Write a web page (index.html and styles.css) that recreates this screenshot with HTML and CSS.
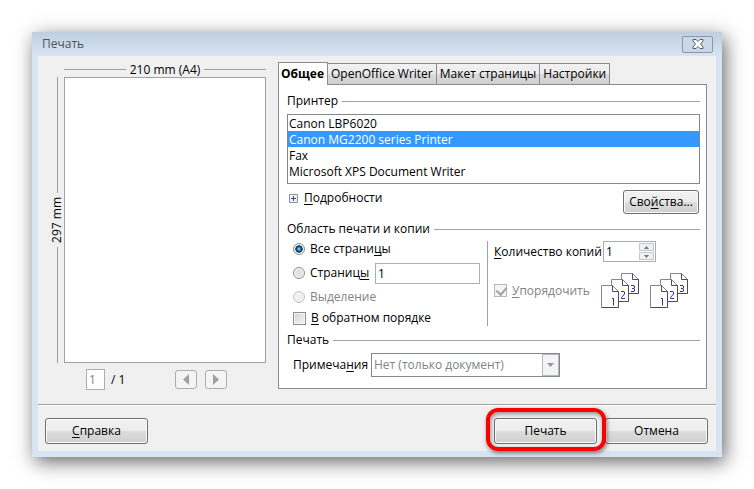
FILE: index.html
```html
<!DOCTYPE html>
<html lang="ru">
<head>
<meta charset="utf-8">
<title>Печать</title>
<link rel="stylesheet" href="styles.css">
</head>
<body>
<svg class="defs" aria-hidden="true">
  <symbol id="collate" viewBox="0 0 38 35">
    <g fill="#fff" stroke="#7d87a0">
      <path d="M20.500.5h11l6 6v14h-17z"/><path d="M31.500.5v6h6v14h-17" stroke="#4a4c58"/>
      <path d="M10.500 6.500h11l6 6v16h-17z"/><path d="M21.500 6.500v6h6v16h-17" stroke="#4a4c58"/>
      <path d="M.5 12.500h11l6 6v16h-17z"/><path d="M11.500 12.500v6h6v16H.5" stroke="#4a4c58"/>
    </g>
    <g fill="none" stroke="#42249c">
      <path d="M30 12.500h3l.5.500v2l-.5.500h-2M33 15.500l.5.500v2l-.5.500h-3"/>
      <path d="M20 18.500h3l.5.500v2L20.500 24.500v1H24"/>
      <path d="M11 25.500h1.500v7"/>
    </g>
  </symbol>
</svg>
<main class="window">
  <header class="titlebar">
    <h1 class="title">Печать</h1>
    <button class="close" type="button" aria-label="Закрыть">
      <svg width="12" height="10" viewBox="0 0 12 10"><path d="M1 .5h3l2 2 2-2h3v1.500L8.500 5 11 8v1.500H8l-2-2-2 2H1V8l2.500-3L1 2z" fill="#fff" stroke="#565f70"/></svg>
    </button>
  </header>
  <form class="client">
    <div class="content">
      <section class="preview" aria-label="Просмотр">
        <div class="ruler ruler-x"><span>210 mm (A4)</span></div>
        <div class="ruler ruler-y"><span>297 mm</span></div>
        <div class="sheet"></div>
        <div class="pager">
          <input class="field page-no" type="text" value="1" aria-label="Номер страницы" disabled>
          <span class="total">/ 1</span>
          <button class="step" type="button" aria-label="Назад" disabled><svg width="6" height="11" viewBox="0 0 6 11"><path d="M6 0v11L0 5.500z"/></svg></button>
          <button class="step" type="button" aria-label="Вперёд" disabled><svg width="6" height="11" viewBox="0 0 6 11"><path d="M0 0v11l6-5.500z"/></svg></button>
        </div>
      </section>
      <section class="settings">
        <div class="tabs" role="tablist">
          <button class="tab active" type="button" role="tab" aria-selected="true">Общее</button>
          <button class="tab" type="button" role="tab">OpenOffice Writer</button>
          <button class="tab" type="button" role="tab">Макет страницы</button>
          <button class="tab" type="button" role="tab">Настройки</button>
        </div>
        <div class="panel" role="tabpanel">
          <h2 class="group">Принтер</h2>
          <select class="printers" size="4" aria-label="Принтер">
            <option>Canon LBP6020</option>
            <option selected>Canon MG2200 series Printer</option>
            <option>Fax</option>
            <option>Microsoft XPS Document Writer</option>
          </select>
          <div class="details">
            <button class="expand" type="button">
              <svg width="9" height="9" viewBox="0 0 9 9"><path d="M.5.5h8v8h-8z" fill="#f2f3f5" stroke="#8e929c"/><path d="M2 4.500h5M4.500 2v5" stroke="#2b4f9c"/></svg>
              <span><u>П</u>одробности</span>
            </button>
            <button class="btn props" type="button">Сво<u>й</u>ства...</button>
          </div>
          <h2 class="group">Область печати и копии</h2>
          <div class="range">
            <div class="range-list">
              <label class="option"><input class="radio" type="radio" name="range" checked><span>Все страни<u>ц</u>ы</span></label>
              <div class="option">
                <label class="option-label"><input class="radio" type="radio" name="range"><span>Страниц<u>ы</u></span></label>
                <input class="field pages" type="text" value="1" aria-label="Страницы">
              </div>
              <label class="option off"><input class="radio" type="radio" name="range" disabled><span>Выделение</span></label>
              <label class="option reverse"><input class="check" type="checkbox"><span><u>В</u> обратном порядке</span></label>
            </div>
            <div class="copies">
              <div class="copy-row">
                <label for="copies"><u>К</u>оличество копий</label>
                <div class="spinner">
                  <input id="copies" type="text" value="1">
                  <div class="arrows">
                    <button type="button" aria-label="Больше"><svg width="5" height="3" viewBox="0 0 5 3"><path d="M0 3h5L2.500 0z"/></svg></button>
                    <button type="button" aria-label="Меньше"><svg width="5" height="3" viewBox="0 0 5 3"><path d="M0 0h5L2.500 3z"/></svg></button>
                  </div>
                </div>
              </div>
              <div class="collate-row">
                <label class="collate off"><input class="check" type="checkbox" checked disabled><span><u>У</u>порядочить</span></label>
                <svg class="stack" width="38" height="35"><use href="#collate"/></svg>
                <svg class="stack" width="38" height="35"><use href="#collate"/></svg>
              </div>
            </div>
          </div>
          <h2 class="group">Печать</h2>
          <div class="notes">
            <label for="notes">Примеча<u>н</u>ия</label>
            <div class="combo">
              <select id="notes" disabled><option>Нет (только документ)</option></select>
              <span class="drop"><svg width="7" height="4" viewBox="0 0 7 4"><path d="M0 0h7L3.500 4z"/></svg></span>
            </div>
          </div>
        </div>
      </section>
    </div>
    <footer class="actions">
      <button class="btn wide help" type="button"><u>С</u>правка</button>
      <button class="btn wide primary" type="submit">Печать</button>
      <button class="btn wide" type="button">Отмена</button>
    </footer>
  </form>
</main>
</body>
</html>
```
FILE: styles.css
```css
* { box-sizing: border-box; }

body {
  margin: 0;
  padding: 32px;
  background: #fff;
  color: #000;
  font: 12px/16px "Open Sans", "Noto Sans", sans-serif;
}

button, input, select {
  margin: 0;
  padding: 0;
  border: 0;
  border-radius: 0;
  appearance: none;
  color: inherit;
  font: inherit;
}

svg { display: block; flex: none; }
u { text-underline-offset: 2px; }
.defs { position: absolute; width: 0; height: 0; }

.window {
  padding: 0 6px 6px;
  background: #d7e4f2;
  box-shadow: 3px 5px 18px rgba(0, 0, 0, 0.6);
}

.titlebar {
  display: flex;
  align-items: center;
  justify-content: space-between;
  height: 24px;
  margin: 0 -6px;
  padding: 0 9px 0 10px;
  background: linear-gradient(#bfcfdf, #d7e4f2);
}

.title { margin: 0; color: #4b535e; font: inherit; }

.close {
  display: grid;
  place-items: center;
  width: 31px;
  height: 17px;
  border: 1px solid #8b98aa;
  border-radius: 2px;
  background: #c9d7e6;
}

.client { background: #f0f0f0; }

.content { display: flex; padding: 6px 9px 14px 15px; }

.preview {
  display: grid;
  grid-template: 15px 286px auto / 11px 202px;
  flex: none;
  width: 225px;
}

.ruler {
  display: flex;
  align-items: center;
  gap: 4px;
  white-space: nowrap;
}

.ruler::before, .ruler::after {
  content: "";
  flex: 1;
  border-top: 1px solid #a0a0a0;
}

.ruler-x { grid-column: 2; }

.ruler-y {
  grid-column: 1;
  justify-self: start;
  width: 8px;
  writing-mode: vertical-rl;
}

.ruler-y::before, .ruler-y::after {
  border-top: 0;
  border-left: 1px solid #a0a0a0;
}

.ruler-y span { transform: rotate(180deg); }

.sheet { border: 1px solid #a0a0a0; background: #fff; }

.pager {
  display: flex;
  grid-column: 2;
  align-items: center;
  padding: 6px 0 0 22px;
}

.field { border: 1px solid #abadb3; background: #fff; padding: 0 2px; height: 21px; }
.page-no { width: 19px; color: #808080; }
.total { flex: none; width: 64px; margin-left: 6px; }

.step {
  display: grid;
  place-items: center;
  width: 22px;
  height: 19px;
  border: 1px solid #adadad;
  border-radius: 3px;
  background: #f4f4f4;
  fill: #a0a0a0;
}

.step + .step { margin-left: 8px; }

.settings { flex: 1; }

.tabs { display: flex; align-items: flex-end; }

.tab {
  height: 21px;
  padding: 0 3px;
  border: 1px solid #898c95;
  border-left: 0;
  border-bottom: 0;
  background: linear-gradient(#f2f2f2, #ebebeb 50%, #dbdbdb 50%, #cfcfcf);
  white-space: nowrap;
}

.tab.active {
  position: relative;
  height: 23px;
  margin-bottom: -1px;
  padding: 0 3px 1px 2px;
  border-left: 1px solid #898c95;
  background: #fff;
  font-weight: bold;
}

.panel {
  height: 305px;
  padding: 8px 6px 0 8px;
  border: 1px solid #898c95;
  background: #fff;
}

.group {
  display: flex;
  align-items: center;
  gap: 4px;
  margin: 0;
  font: inherit;
}

.group::after { content: ""; flex: 1; border-top: 1px solid #a0a0a0; }

.printers {
  display: block;
  width: 100%;
  height: 70px;
  margin-top: 5px;
  border: 1px solid #828790;
  background: #fff;
  overflow: hidden;
}

.printers option { height: 16px; min-height: 0; padding: 0 1px; line-height: 16px; }

.printers option:checked {
  background: #3399ff linear-gradient(#3399ff, #3399ff);
  color: #fff;
}

.details {
  display: flex;
  align-items: flex-start;
  justify-content: space-between;
  margin: 6px 0 7px;
}

.expand { display: flex; align-items: center; gap: 6px; padding-left: 2px; background: none; }

.btn {
  border: 1px solid #707070;
  border-radius: 3px;
  background: linear-gradient(#f2f2f2, #ebebeb 50%, #dddddd 50%, #cfcfcf);
  box-shadow: inset 0 0 0 1px #fafafa;
}

.props { width: 76px; height: 24px; margin-right: 1px; }

.range { display: flex; padding: 4px 0 5px 6px; }

.range-list { width: 194px; }
.option, .option-label, .collate { display: flex; align-items: center; }
.option { height: 24px; gap: 5px; }
.option:first-child { height: 16px; margin-bottom: 4px; }
.reverse { height: 18px; }
.option-label, .collate { gap: 5px; }
.option-label { flex: none; width: 77px; }
.pages { width: 105px; height: 21px; }
.off { color: #838383; }

.radio {
  flex: none;
  width: 12px;
  height: 12px;
  border: 1px solid #8e8f8f;
  border-radius: 50%;
  background: radial-gradient(#e2e2e2 40%, #f6f6f6 70%);
}

.radio:checked { background: radial-gradient(circle closest-side, #58c5f5 0 15%, #12406b 50% 68%, #f0f0f0 80%); }
.radio:disabled { border-color: #c4c4c4; background: #f0f0f0; }

.check {
  flex: none;
  width: 13px;
  height: 13px;
  border: 1px solid #8e8f8f;
  background: linear-gradient(135deg, #d2d2d2, #f6f6f6);
  box-shadow: inset 0 0 0 1px #f4f4f4;
}

.check:disabled { border-color: #b8b8b8; background: #f4f4f4; }

.check:checked::before {
  content: "";
  display: block;
  width: 5px;
  height: 8px;
  margin: 0 0 0 3px;
  border: solid #a0a0a0;
  border-width: 0 2px 2px 0;
  transform: rotate(40deg);
}

.copies {
  flex: 1;
  height: 85px;
  padding-left: 6px;
  border-left: 1px solid #a0a0a0;
}

.copy-row { display: flex; align-items: center; }
.copy-row label { width: 109px; white-space: nowrap; }

.spinner {
  display: flex;
  width: 53px;
  height: 21px;
  padding: 1px;
  border: 1px solid #abadb3;
}

.spinner input { flex: 1; min-width: 0; padding-left: 1px; }
.arrows { display: grid; gap: 1px; width: 15px; }

.arrows button {
  display: grid;
  place-items: center;
  border: 1px solid #c4c7cc;
  background: #f0f0f0;
  fill: #727780;
}

.collate-row { display: flex; align-items: center; gap: 11px; margin-top: 11px; }
.collate { width: 96px; }

.notes { display: flex; align-items: center; margin-top: 5px; padding-left: 6px; }
.notes label { width: 78px; }

.combo {
  display: flex;
  width: 189px;
  height: 24px;
  border: 1px solid #828790;
  background: #fff;
}

.combo select { flex: 1; min-width: 0; padding-left: 2px; background: none; color: #838383; opacity: 1; }

.drop {
  display: grid;
  place-items: center;
  width: 17px;
  border: 1px solid #b5b9bf;
  background: #f4f4f4;
  fill: #969696;
}

.actions {
  display: flex;
  gap: 8px;
  padding: 13px 8px 7px 7px;
  border-top: 1px solid #a0a0a0;
  box-shadow: inset 0 1px #fff;
}

.wide { width: 103px; height: 26px; }
.help { margin-right: auto; }
.primary { position: relative; }

.primary::after {
  content: "";
  position: absolute;
  inset: -11px -10px -8px -9px;
  border: 4px solid #fb0000;
  border-radius: 12px;
  box-shadow: 1px 2px 4px rgba(0, 0, 0, 0.5), inset 1px 2px 4px rgba(0, 0, 0, 0.4);
}
```
